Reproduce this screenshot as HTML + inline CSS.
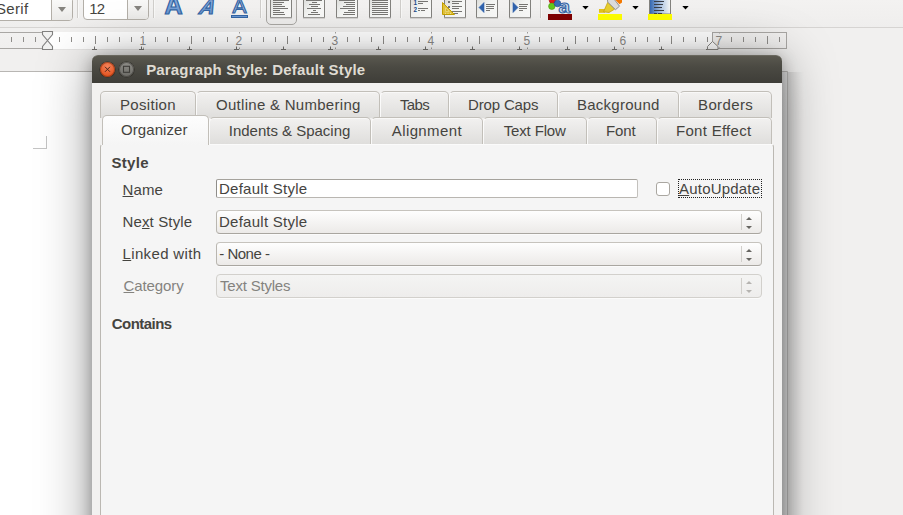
<!DOCTYPE html>
<html><head><meta charset="utf-8"><title>Paragraph Style: Default Style</title>
<style>
*{box-sizing:border-box;margin:0;padding:0}
html,body{width:903px;height:515px;overflow:hidden}
body{position:relative;background:#f1f0ef;font-family:"Liberation Sans",sans-serif;font-size:15px;color:#3c3b37}
.abs{position:absolute}
.t{position:absolute;white-space:nowrap;line-height:18px;height:18px}
.t u{text-decoration:underline;text-decoration-thickness:1px;text-underline-offset:1px}
#toolbar{left:0;top:0;width:903px;height:27px;background:linear-gradient(#f3f2f1,#efeeed)}
#tbline{left:0;top:27px;width:903px;height:1px;background:#d6d4d2}
#gap{left:0;top:28px;width:903px;height:43px;background:#f1f0ef}
#page{left:0;top:71px;width:788px;height:444px;background:#fff;border-top:1px solid #b8b6b3;border-right:1px solid #d2d1cf}
.combo{background:#fff;border:1px solid #b3afa8;border-radius:4px;height:24px;top:-3px}
.combo .btn{position:absolute;right:0;top:0;bottom:0;width:21px;border-left:1px solid #b3afa8;background:linear-gradient(#fbfbfa,#ebeae8);border-radius:0 3px 3px 0}
.combo .btn:after{content:"";position:absolute;left:6px;top:9.200px;border:4.5px solid transparent;border-top:5px solid #85837e;border-bottom:0}
.combo .c2:after{left:6px;top:9px}
/* dialog */
#dialog{left:92px;top:55px;width:690px;height:760px;background:#f2f1f0;border-radius:6px 6px 0 0;box-shadow:0 3px 16px rgba(0,0,0,.30),0 5px 54px rgba(0,0,0,.40)}
#title{left:92px;top:55px;width:690px;height:28px;border-radius:6px 6px 0 0;background:linear-gradient(#5a584f 0,#4b4a43 40%,#3e3d38 100%);border-top:1px solid #6a685f}
.wbtn{position:absolute;top:5.500px;width:15px;height:15px;border-radius:50%}
.tab{position:absolute;height:27px;border:1px solid #c2bfb9;border-left-color:rgba(255,255,255,.8);border-bottom:0;border-radius:5px 5px 0 0;background:linear-gradient(#f2f1f0,#dfdedc);box-shadow:inset 0 1px 0 rgba(255,255,255,.5)}
.tab.first{border-left-color:#c2bfb9}
.tab.sel{background:linear-gradient(#fdfdfd,#f5f5f5);height:30px;border-left-color:#c2bfb9;box-shadow:none}
#pane{left:100px;top:144px;width:674px;height:500px;background:#f5f5f5;border:1px solid #bbb8b2;border-top-color:#fbfbfb;border-radius:3px}
.field{position:absolute;left:216px;width:546px;border:1px solid #b9b6b0;border-radius:4px}
.cb{height:24px;background:linear-gradient(#fefefe,#eceae8);border-color:#c6c3bd #b9b6b0 #a9a6a0;box-shadow:0 1px 0 rgba(255,255,255,.6)}
.cb i{position:absolute;right:19px;top:3px;bottom:3px;width:1px;background:#d1cfcb}
.up,.dn{position:absolute;right:9.500px;border:3px solid transparent;width:0;height:0}
.up{top:6px;border-bottom:3.200px solid #666561;border-top:0}
.dn{top:15px;border-top:3.200px solid #666561;border-bottom:0}
.dis .up{border-bottom-color:#b5b3b0}.dis .dn{border-top-color:#b5b3b0}
</style></head><body>
<div class="abs" id="toolbar"></div>
<div class="abs" id="tbline"></div>
<div class="abs" id="gap"></div>
<div class="abs" id="page"></div>
<div class="abs" style="left:33px;top:148px;width:14px;height:1px;background:#c4c4c4"></div><div class="abs" style="left:46px;top:136px;width:1px;height:13px;background:#c4c4c4"></div>

<div class="abs combo" style="left:-40px;width:113px"><div class="btn c1"></div></div>
<div class="abs combo" style="left:83px;width:66px;top:-4px"><div class="btn c2"></div></div>
<svg class="abs" style="left:0;top:0" width="903" height="28" viewBox="0 0 903 28"><defs><linearGradient id="pg" x1="0" y1="0" x2="1" y2="1"><stop offset="0" stop-color="#d8d9d6"/><stop offset=".5" stop-color="#f4f5f3"/><stop offset="1" stop-color="#fbfbfa"/></linearGradient><linearGradient id="ab" x1="0" y1="0" x2="0" y2="1"><stop offset="0" stop-color="#9dbbe3"/><stop offset="1" stop-color="#5f8fce"/></linearGradient><linearGradient id="bl" x1="0" y1="0" x2="1" y2="0"><stop offset="0" stop-color="#2f64b0"/><stop offset=".6" stop-color="#b9cde6"/><stop offset="1" stop-color="#f6f7f5"/></linearGradient></defs><rect x="77" y="0" width="1" height="18" fill="#d0cecb"/><rect x="78" y="0" width="1" height="18" fill="#f9f9f8"/><rect x="153" y="0" width="1" height="18" fill="#d0cecb"/><rect x="154" y="0" width="1" height="18" fill="#f9f9f8"/><rect x="260" y="0" width="1" height="18" fill="#d0cecb"/><rect x="261" y="0" width="1" height="18" fill="#f9f9f8"/><rect x="400" y="0" width="1" height="18" fill="#d0cecb"/><rect x="401" y="0" width="1" height="18" fill="#f9f9f8"/><rect x="540" y="0" width="1" height="18" fill="#d0cecb"/><rect x="541" y="0" width="1" height="18" fill="#f9f9f8"/><text x="173.5" y="13.700" text-anchor="middle" font-family="Liberation Sans, sans-serif" font-weight="bold" font-size="25" fill="url(#ab)" stroke="#3465a4" stroke-width="1.2">A</text><text x="206" y="13.700" text-anchor="middle" font-family="Liberation Sans, sans-serif" font-weight="bold" font-style="italic" font-size="21" fill="url(#ab)" stroke="#3465a4" stroke-width="1.2" transform="translate(206 13.7) skewX(-14) translate(-206 -13.7)">A</text><text x="239.5" y="12.5" text-anchor="middle" font-family="Liberation Sans, sans-serif" font-size="21" fill="#b7cdea" stroke="#3465a4" stroke-width="1.2">A</text><rect x="231.5" y="15.5" width="16" height="2" fill="#6b97d3" stroke="#3465a4" stroke-width="1"/><rect x="266.5" y="-6" width="30" height="30.5" rx="4.5" fill="#eeedec" stroke="#a9a7a3"/><g transform="translate(270,0)"><rect x="0.5" y="-4" width="21" height="21.5" fill="url(#pg)" stroke="#83827e" stroke-width="1"/><rect x="0" y="17.5" width="22" height="1" fill="#b9b8b5"/><path d="M3 0.5H19M3 2.5H14M3 4.5H12M3 6.5H15M3 8.5H18M3 10.5H10M3 12.5H14M3 14.5H15" stroke="#777673" stroke-width="1" fill="none"/></g><g transform="translate(303,0)"><rect x="0.5" y="-4" width="21" height="21.5" fill="url(#pg)" stroke="#83827e" stroke-width="1"/><rect x="0" y="17.5" width="22" height="1" fill="#b9b8b5"/><path d="M3 0.5H19M9 2.5H14M6 4.5H17M8 6.5H15M4 8.5H18M10 10.5H13M8 12.5H15M5 14.5H17" stroke="#777673" stroke-width="1" fill="none"/></g><g transform="translate(336,0)"><rect x="0.5" y="-4" width="21" height="21.5" fill="url(#pg)" stroke="#83827e" stroke-width="1"/><rect x="0" y="17.5" width="22" height="1" fill="#b9b8b5"/><path d="M3 0.5H19M8 2.5H19M10 4.5H19M7 6.5H19M4 8.5H19M12 10.5H19M8 12.5H19M7 14.5H19" stroke="#777673" stroke-width="1" fill="none"/></g><g transform="translate(369,0)"><rect x="0.5" y="-4" width="21" height="21.5" fill="url(#pg)" stroke="#83827e" stroke-width="1"/><rect x="0" y="17.5" width="22" height="1" fill="#b9b8b5"/><path d="M3 0.5H19M3 2.5H19M3 4.5H19M3 6.5H19M3 8.5H19M3 10.5H19M3 12.5H19M3 14.5H19" stroke="#777673" stroke-width="1" fill="none"/></g><g transform="translate(410,0)"><rect x="0.5" y="-4" width="21" height="21.5" fill="url(#pg)" stroke="#83827e" stroke-width="1"/><rect x="0" y="17.5" width="22" height="1" fill="#b9b8b5"/><path d="M8 1.5H18M8 3.5H13M8 8.5H18M8 10.5H10M11 10.5H15" stroke="#777673" stroke-width="1" fill="none"/><text x="5.3" y="5.300" text-anchor="middle" font-family="Liberation Sans, sans-serif" font-weight="bold" font-size="6.300" fill="#204a87">1</text><text x="5.3" y="12.300" text-anchor="middle" font-family="Liberation Sans, sans-serif" font-weight="bold" font-size="6.300" fill="#204a87">2</text></g><g transform="translate(444,0)"><rect x="0.5" y="-4" width="21" height="21.5" fill="url(#pg)" stroke="#83827e" stroke-width="1"/><rect x="0" y="17.5" width="22" height="1" fill="#b9b8b5"/><path d="M8 1.5H18M8 3.5H15M8 6.5H18M8 8.5H15M8 11.5H18M10 13.5H14" stroke="#777673" stroke-width="1" fill="none"/><rect x="4" y="1" width="2" height="2" fill="#777"/><rect x="4" y="6" width="2" height="2" fill="#777"/><path d="M-1.500 2.500V14.500H10.500Z" fill="#e2c23a" stroke="#c4a000" stroke-width="1" stroke-linejoin="round"/><path d="M1.600 7.800V11.400H5.200Z" fill="#d4b11a" stroke="#f5e89a" stroke-width=".7" stroke-linejoin="round"/><path d="M1 13.300h1m1.500 0h1m1.500 0h1" stroke="#fbf3b8" stroke-width=".8"/></g><g transform="translate(476,0)"><rect x="0.5" y="-4" width="21" height="21.5" fill="url(#pg)" stroke="#83827e" stroke-width="1"/><rect x="0" y="17.5" width="22" height="1" fill="#b9b8b5"/><path d="M10 4.5H19M10 6.5H18M10 8.5H18M10 10.5H14" stroke="#777673" stroke-width="1" fill="none"/><path d="M8 2.500V12.500L3 7.500Z" fill="#2f62ad" stroke="#2f62ad" stroke-width=".6" stroke-linejoin="round"/></g><g transform="translate(509,0)"><rect x="0.5" y="-4" width="21" height="21.5" fill="url(#pg)" stroke="#83827e" stroke-width="1"/><rect x="0" y="17.5" width="22" height="1" fill="#b9b8b5"/><path d="M10 4.5H19M10 6.5H18M10 8.5H18M10 10.5H14" stroke="#777673" stroke-width="1" fill="none"/><path d="M4 2.500V12.500L9 7.500Z" fill="#2f62ad" stroke="#2f62ad" stroke-width=".6" stroke-linejoin="round"/></g><circle cx="552.5" cy="0.300" r="3.3" fill="#e01b1b" stroke="#a40000" stroke-width=".6"/><circle cx="551.8" cy="6.300" r="3.200" fill="#63c81e" stroke="#4e9a06" stroke-width=".6"/><circle cx="557.5" cy="3.500" r="3.300" fill="#3b6fb8" stroke="#204a87" stroke-width=".6"/><text x="0" y="0" text-anchor="middle" font-family="Liberation Sans, sans-serif" font-weight="bold" font-size="17.500" fill="#d3e0f2" stroke="#3465a4" stroke-width="1" transform="translate(564.3 13.4) scale(1.18 1)">a</text><rect x="548" y="14" width="24" height="6" fill="#800000"/><rect x="598" y="14" width="24" height="6" fill="#ffff00"/><rect x="599" y="9" width="6" height="3.800" fill="#e3c21c"/><path d="M603.500 11.800L607.800 2.200 614.500 9.200 609 12.500z" fill="#e8cf2e" stroke="#c9a40e" stroke-width=".8" stroke-linejoin="round"/><path d="M607.300 -1L607.800 2.200 615.500 9.700 619.500 6.200 614 -1z" fill="#dcdcda" stroke="#7f7f7c" stroke-width=".8" stroke-linejoin="round"/><path d="M614.500 -1L619.500 4.200 622 2.500V-1z" fill="#f57900"/><rect x="649.5" y="-4" width="21" height="18" fill="url(#bl)" stroke="#83827e"/><path d="M654 1.500h10M654 4.500h9M654 7.500h8M654 10.500h10M654 13.500h3M658 13.500h4" stroke="#3b3f47" stroke-width="1"/><rect x="648" y="14" width="24" height="6" fill="#ffff00"/><path d="M582.3 6h6.400l-3.200 3.600z" fill="#000"/><path d="M632.3 6h6.400l-3.200 3.600z" fill="#000"/><path d="M682.3 6h6.400l-3.200 3.600z" fill="#000"/></svg>
<svg class="abs" style="left:0;top:28px" width="903" height="28" viewBox="0 28 903 28"><defs><linearGradient id="rg" x1="0" y1="0" x2="0" y2="1"><stop offset="0" stop-color="#fff"/><stop offset=".5" stop-color="#fff"/><stop offset=".85" stop-color="#e4e3e2"/><stop offset="1" stop-color="#dfdedd"/></linearGradient><linearGradient id="rm" x1="0" y1="0" x2="0" y2="1"><stop offset="0" stop-color="#f2f1f0"/><stop offset="1" stop-color="#f0efee"/></linearGradient></defs><rect x="47" y="32" width="666" height="17" fill="#fff"/><rect x="47" y="49" width="666" height="1" fill="#e6e5e4"/><rect x="-1.5" y="32.5" width="49" height="16" fill="url(#rm)" stroke="#a9a7a4"/><rect x="712.5" y="32.5" width="74" height="16" fill="url(#rm)" stroke="#a9a7a4"/><path d="M11.5 37v5M23.5 37v5M35.5 37v5M59.5 37v5M71.5 37v5M83.5 37v5M95.5 36v8M107.5 37v5M119.5 37v5M131.5 37v5M155.5 37v5M167.5 37v5M179.5 37v5M191.5 36v8M203.5 37v5M215.5 37v5M227.5 37v5M251.5 37v5M263.5 37v5M275.5 37v5M287.5 36v8M299.5 37v5M311.5 37v5M323.5 37v5M347.5 37v5M359.5 37v5M371.5 37v5M383.5 36v8M395.5 37v5M407.5 37v5M419.5 37v5M443.5 37v5M455.5 37v5M467.5 37v5M479.5 36v8M491.5 37v5M503.5 37v5M515.5 37v5M539.5 37v5M551.5 37v5M563.5 37v5M575.5 36v8M587.5 37v5M599.5 37v5M611.5 37v5M635.5 37v5M647.5 37v5M659.5 37v5M671.5 36v8M683.5 37v5M695.5 37v5M707.5 37v5M731.5 37v5M743.5 37v5M755.5 37v5M767.5 36v8M779.5 37v5" stroke="#8f8d8a" stroke-width="1" fill="none"/><text x="142.8" y="45" text-anchor="middle" font-family="Liberation Sans, sans-serif" font-size="12" fill="#8c8a87">1</text><path d="M143.5 32v1.5M143.5 47.5v1.5" stroke="#a5a3a0" stroke-width="1"/><text x="238.8" y="45" text-anchor="middle" font-family="Liberation Sans, sans-serif" font-size="12" fill="#8c8a87">2</text><path d="M239.5 32v1.5M239.5 47.5v1.5" stroke="#a5a3a0" stroke-width="1"/><text x="334.8" y="45" text-anchor="middle" font-family="Liberation Sans, sans-serif" font-size="12" fill="#8c8a87">3</text><path d="M335.5 32v1.5M335.5 47.5v1.5" stroke="#a5a3a0" stroke-width="1"/><text x="430.8" y="45" text-anchor="middle" font-family="Liberation Sans, sans-serif" font-size="12" fill="#8c8a87">4</text><path d="M431.5 32v1.5M431.5 47.5v1.5" stroke="#a5a3a0" stroke-width="1"/><text x="526.8" y="45" text-anchor="middle" font-family="Liberation Sans, sans-serif" font-size="12" fill="#8c8a87">5</text><path d="M527.5 32v1.5M527.5 47.5v1.5" stroke="#a5a3a0" stroke-width="1"/><text x="622.8" y="45" text-anchor="middle" font-family="Liberation Sans, sans-serif" font-size="12" fill="#8c8a87">6</text><path d="M623.5 32v1.5M623.5 47.5v1.5" stroke="#a5a3a0" stroke-width="1"/><text x="718.8" y="45" text-anchor="middle" font-family="Liberation Sans, sans-serif" font-size="12" fill="#8c8a87">7</text><path d="M719.5 32v1.5M719.5 47.5v1.5" stroke="#a5a3a0" stroke-width="1"/><path d="M94.5 46.5v3M92 49.5h5M141.5 46.5v3M139 49.5h5M189.5 46.5v3M187 49.5h5M236.5 46.5v3M234 49.5h5M283.5 46.5v3M281 49.5h5M330.5 46.5v3M328 49.5h5M378.5 46.5v3M376 49.5h5M425.5 46.5v3M423 49.5h5M472.5 46.5v3M470 49.5h5M519.5 46.5v3M517 49.5h5M567.5 46.5v3M565 49.5h5M614.5 46.5v3M612 49.5h5M661.5 46.5v3M659 49.5h5M708.5 46.5v3M706 49.5h5" stroke="#777572" stroke-width="1" fill="none"/><path d="M42.5 31.500h10v3l-5 6 5 6v3h-10v-3l5 -6 -5 -6z" fill="#f2f2f1" stroke="#828180" stroke-width="1.100"/><path d="M707.5 49.5v-3l5-5 5.500 5v3z" fill="#fff" stroke="#8a8885" stroke-width="1"/></svg>

<div class="abs" id="dialog"></div>
<div class="abs" style="left:782px;top:72px;width:22px;height:443px;background:linear-gradient(to right,rgba(0,0,0,.13),rgba(0,0,0,.11) 6px,rgba(0,0,0,0) 100%)"></div>
<div class="abs" id="title">
  <div class="wbtn" style="left:8px;background:radial-gradient(circle at 50% 30%,#f3845c,#e2521f 75%);box-shadow:inset 0 0 0 1px rgba(110,40,12,.5),0 0 0 .6px rgba(45,43,38,.9)"></div>
  <div class="wbtn" style="left:27px;background:linear-gradient(#8f8e89,#6a6964);box-shadow:inset 0 0 0 1px rgba(52,51,47,.55),0 0 0 .6px rgba(45,43,38,.9)"></div>
  <svg class="abs" style="left:0;top:-1.300px" width="60" height="28" viewBox="0 0 60 28"><path d="M13 11.800l5 5m0-5l-5 5" stroke="#4a261b" stroke-width="1" fill="none"/><rect x="31.500" y="11.300" width="6" height="6" fill="none" stroke="#3e3d39" stroke-width="1.100"/></svg>
</div>

<div class="tab first" style="left:100px;top:91px;width:96px"></div>
<div class="tab" style="left:196px;top:91px;width:184px"></div>
<div class="tab" style="left:380px;top:91px;width:69px"></div>
<div class="tab" style="left:449px;top:91px;width:109px"></div>
<div class="tab" style="left:558px;top:91px;width:121px"></div>
<div class="tab" style="left:679px;top:91px;width:93px"></div>

<div class="tab" style="left:209px;top:117px;width:162px"></div>
<div class="tab" style="left:371px;top:117px;width:112px"></div>
<div class="tab" style="left:483px;top:117px;width:104px"></div>
<div class="tab" style="left:587px;top:117px;width:70px"></div>
<div class="tab" style="left:657px;top:117px;width:115px"></div>

<div class="abs" id="pane"></div>
<div class="tab sel" style="left:102px;top:115px;width:107px"></div>

<div class="field" style="top:179px;width:422px;height:19px;background:#fff;border-radius:2px;border-color:#a5a29c #c3c1bd #b9b6b1 #8f8d89"></div>
<div class="abs" style="left:656px;top:182px;width:14px;height:14px;background:#fff;border:1px solid #aaa7a1;border-radius:3px"></div>
<div class="abs" style="left:678px;top:179px;width:84px;height:19px;border:1px dotted #222"></div>

<div class="field cb" style="top:210px"><i></i><b class="up"></b><b class="dn"></b></div>
<div class="field cb" style="top:242px"><i></i><b class="up"></b><b class="dn"></b></div>
<div class="field cb dis" style="top:274px;background:linear-gradient(#f4f4f3,#eeedec);border-color:#d2d0cc"><i></i><b class="up"></b><b class="dn"></b></div>
<div class="t" style="left:146.20px;top:60.80px;letter-spacing:0.162px;color:#dfdbd2;font-weight:bold;font-size:15px">Paragraph Style: Default Style</div>
<div class="t" style="left:120.00px;top:95.80px;letter-spacing:0.311px;color:#45443f;font-weight:normal;font-size:15px">Position</div>
<div class="t" style="left:216.00px;top:95.80px;letter-spacing:0.284px;color:#45443f;font-weight:normal;font-size:15px">Outline &amp; Numbering</div>
<div class="t" style="left:400.00px;top:95.80px;letter-spacing:-0.645px;color:#45443f;font-weight:normal;font-size:15px">Tabs</div>
<div class="t" style="left:468.00px;top:95.80px;letter-spacing:-0.150px;color:#45443f;font-weight:normal;font-size:15px">Drop Caps</div>
<div class="t" style="left:577.00px;top:95.80px;letter-spacing:0.254px;color:#45443f;font-weight:normal;font-size:15px">Background</div>
<div class="t" style="left:698.00px;top:95.80px;letter-spacing:0.371px;color:#45443f;font-weight:normal;font-size:15px">Borders</div>
<div class="t" style="left:121.00px;top:120.80px;letter-spacing:0.079px;color:#45443f;font-weight:normal;font-size:15px">Organizer</div>
<div class="t" style="left:228.80px;top:121.80px;letter-spacing:-0.013px;color:#45443f;font-weight:normal;font-size:15px">Indents &amp; Spacing</div>
<div class="t" style="left:391.75px;top:121.80px;letter-spacing:0.402px;color:#45443f;font-weight:normal;font-size:15px">Alignment</div>
<div class="t" style="left:503.75px;top:121.80px;letter-spacing:-0.158px;color:#45443f;font-weight:normal;font-size:15px">Text Flow</div>
<div class="t" style="left:606.00px;top:121.80px;letter-spacing:-0.116px;color:#45443f;font-weight:normal;font-size:15px">Font</div>
<div class="t" style="left:676.00px;top:121.80px;letter-spacing:0.291px;color:#45443f;font-weight:normal;font-size:15px">Font Effect</div>
<div class="t" style="left:111.50px;top:153.80px;letter-spacing:0.310px;color:#45443f;font-weight:bold;font-size:15px">Style</div>
<div class="t" style="left:122.50px;top:180.80px;letter-spacing:0.110px;color:#45443f;font-weight:normal;font-size:15px"><u>N</u>ame</div>
<div class="t" style="left:122.50px;top:212.80px;letter-spacing:0.137px;color:#45443f;font-weight:normal;font-size:15px">Ne<u>x</u>t Style</div>
<div class="t" style="left:122.50px;top:244.80px;letter-spacing:0.355px;color:#45443f;font-weight:normal;font-size:15px"><u>L</u>inked with</div>
<div class="t" style="left:123.50px;top:276.80px;letter-spacing:-0.088px;color:#84837f;font-weight:normal;font-size:15px"><u>C</u>ategory</div>
<div class="t" style="left:111.75px;top:314.80px;letter-spacing:-0.546px;color:#45443f;font-weight:bold;font-size:15px">Contains</div>
<div class="t" style="left:679.00px;top:179.80px;letter-spacing:0.202px;color:#45443f;font-weight:normal;font-size:15px"><u>A</u>utoUpdate</div>
<div class="t" style="left:219.00px;top:179.80px;letter-spacing:0.254px;color:#45443f;font-weight:normal;font-size:15px">Default Style</div>
<div class="t" style="left:219.00px;top:212.80px;letter-spacing:0.254px;color:#45443f;font-weight:normal;font-size:15px">Default Style</div>
<div class="t" style="left:219.25px;top:244.80px;letter-spacing:-0.491px;color:#45443f;font-weight:normal;font-size:15px">- None -</div>
<div class="t" style="left:220.00px;top:276.80px;letter-spacing:-0.202px;color:#84837f;font-weight:normal;font-size:15px">Text Styles</div>
<div class="t" style="left:-4.00px;top:-0.20px;letter-spacing:0.331px;color:#45443f;font-weight:normal;font-size:15px">Serif</div>
<div class="t" style="left:89.20px;top:-0.20px;letter-spacing:-0.842px;color:#45443f;font-weight:normal;font-size:15px">12</div>
</body></html>
